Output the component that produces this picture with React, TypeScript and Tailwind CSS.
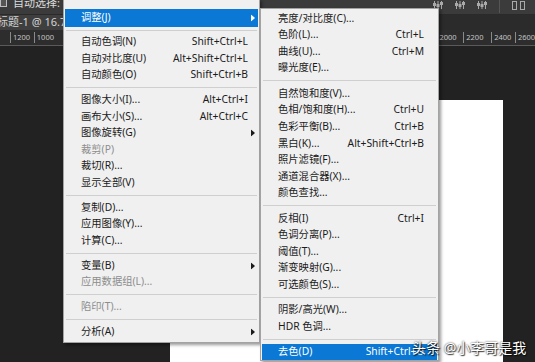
import React from "react";

type Item =
  | { sep: true }
  | { sep?: false; label: string; sc?: string; arrow?: boolean; off?: boolean; hl?: boolean };

const S: Item = { sep: true };

const MAIN: Item[] = [
  { label: "调整(J)", arrow: true, hl: true },
  S,
  { label: "自动色调(N)", sc: "Shift+Ctrl+L" },
  { label: "自动对比度(U)", sc: "Alt+Shift+Ctrl+L" },
  { label: "自动颜色(O)", sc: "Shift+Ctrl+B" },
  S,
  { label: "图像大小(I)...", sc: "Alt+Ctrl+I" },
  { label: "画布大小(S)...", sc: "Alt+Ctrl+C" },
  { label: "图像旋转(G)", arrow: true },
  { label: "裁剪(P)", off: true },
  { label: "裁切(R)..." },
  { label: "显示全部(V)" },
  S,
  { label: "复制(D)..." },
  { label: "应用图像(Y)..." },
  { label: "计算(C)..." },
  S,
  { label: "变量(B)", arrow: true },
  { label: "应用数据组(L)...", off: true },
  S,
  { label: "陷印(T)...", off: true },
  S,
  { label: "分析(A)", arrow: true },
];

const SUB: Item[] = [
  { label: "亮度/对比度(C)..." },
  { label: "色阶(L)...", sc: "Ctrl+L" },
  { label: "曲线(U)...", sc: "Ctrl+M" },
  { label: "曝光度(E)..." },
  S,
  { label: "自然饱和度(V)..." },
  { label: "色相/饱和度(H)...", sc: "Ctrl+U" },
  { label: "色彩平衡(B)...", sc: "Ctrl+B" },
  { label: "黑白(K)...", sc: "Alt+Shift+Ctrl+B" },
  { label: "照片滤镜(F)..." },
  { label: "通道混合器(X)..." },
  { label: "颜色查找..." },
  S,
  { label: "反相(I)", sc: "Ctrl+I" },
  { label: "色调分离(P)..." },
  { label: "阈值(T)..." },
  { label: "渐变映射(G)..." },
  { label: "可选颜色(S)..." },
  S,
  { label: "阴影/高光(W)..." },
  { label: "HDR 色调..." },
  S,
  { label: "去色(D)", sc: "Shift+Ctrl+U", hl: true },
];

function Arrow({ white }: { white?: boolean }) {
  return (
    <svg width="4" height="7" viewBox="0 0 4 7" className="absolute right-[3px] top-1/2 -translate-y-1/2">
      <path d="M0 0 L4 3.5 L0 7 Z" fill={white ? "#ffffff" : "#1b1b1b"} />
    </svg>
  );
}

function Menu({ items, sub }: { items: Item[]; sub?: boolean }) {
  return (
    <>
      {items.map((it, i) => {
        if (it.sep)
          return (
            <div key={i} className={`${sub ? "h-[8.8px]" : i === 1 ? "h-[6.75px]" : "h-[8.5px]"} flex items-center px-[1px]`}>
              <div className="w-full h-px bg-[#cfcfcf]" />
            </div>
          );
        const color = it.hl ? "text-white" : it.off ? "text-[#8d8d8d]" : "text-[#1b1b1b]";
        const h = sub ? "h-[16.6px]" : it.hl ? "h-[18px]" : "h-[16.5px]";
        return (
          <div
            key={i}
            className={`relative flex items-center justify-between ${h} ${sub ? "pl-[16px] pr-[13px]" : "pl-[16px] pr-[10px]"} ${it.hl ? "bg-[#0a78d4]" : ""} ${color}`}
          >
            <span>{it.label}</span>
            {it.sc && <span>{it.sc}</span>}
            {it.arrow && <Arrow white={it.hl} />}
          </div>
        );
      })}
    </>
  );
}

function Tick({ w, label }: { w: string; label: string }) {
  return (
    <div className={`${w} h-full border-l border-[#8a8a8a] flex items-center pl-[2px] text-[7.5px] text-[#c4c4c4]`}>
      {label}
    </div>
  );
}

export default function App() {
  return (
    <div className="relative w-[535px] h-[362px] overflow-hidden bg-[#222222] font-['Noto_Sans','Noto_Sans_CJK_SC',sans-serif] flex flex-col">
      {/* toolbar */}
      <div className="h-[15px] bg-[#3b3b3b] border-b border-[#2a2a2a] flex items-start shrink-0">
        <div className="w-[7px] h-[8px] mt-[-1px] border border-[#bdbdbd] bg-[#555]" />
        <span className="ml-[6px] mt-[-4px] text-[11px] leading-[14px] text-[#dcdcdc]">自动选择:</span>
        <div className="ml-auto flex items-start gap-[12px] mr-[10px] mt-[1px]">
          {[0, 1, 2].map(k => (
            <svg key={k} width="10" height="9" viewBox="0 0 10 9">
              <rect x="1" y="0" width="1" height="8" fill="#a9a9a9" />
              <rect x="4.5" y="0" width="1" height="8" fill="#a9a9a9" />
              <rect x="8" y="0" width="1" height="8" fill="#a9a9a9" />
              <rect x="0" y="2" width="3" height="3" fill="#a9a9a9" />
              <rect x="3.5" y="3" width="3" height="3" fill="#a9a9a9" />
              <rect x="7" y="1" width="3" height="3" fill="#a9a9a9" />
            </svg>
          ))}
          <div className="w-px h-[13px] mt-[-1px] bg-[#555]" />
          <svg width="13" height="9" viewBox="0 0 13 9">
            <rect x="0.5" y="0.5" width="4" height="8" fill="none" stroke="#a9a9a9" />
            <rect x="8.5" y="0.5" width="4" height="8" fill="none" stroke="#a9a9a9" />
          </svg>
        </div>
      </div>
      {/* tab bar */}
      <div className="h-[15px] bg-[#2b2b2b] flex shrink-0">
        <div className="w-[90px] bg-[#3f3f3f] flex items-center overflow-hidden">
          <span className="ml-[-14px] whitespace-nowrap text-[11px] text-[#d4d4d4]">无标题-1 @ 16.7%</span>
        </div>
      </div>
      {/* ruler */}
      <div className="h-[16px] bg-[#2d2d2d] border-b border-[#5a5a5a] flex items-stretch py-[2px] shrink-0">
        <div className="w-[10px]" />
        <Tick w="w-[24px]" label="1200" />
        <Tick w="w-[27px]" label="1000" />
        <div className="w-[378px]" />
        <Tick w="w-[27px]" label="2000" />
        <Tick w="w-[28px]" label="2200" />
        <Tick w="w-[24px]" label="2400" />
        <Tick w="w-[20px]" label="2600" />
      </div>
      {/* canvas */}
      <div className="flex-1 flex pl-[170px] pt-[54px]">
        <div className="w-[333px] bg-white" />
      </div>

      {/* main menu */}
      <div className="absolute left-[63px] top-[-1px] w-[197px] bg-[#f0f0f0] border border-[#a3a3a3] shadow-[2px_2px_3px_rgba(0,0,0,0.4)] pt-[9px] pb-[1.5px] px-[1px] text-[10.3px]">
        <Menu items={MAIN} />
      </div>

      {/* submenu */}
      <div className="absolute left-[260px] top-[8px] w-[179px] bg-[#f0f0f0] border border-[#a3a3a3] shadow-[2px_2px_3px_rgba(0,0,0,0.4)] pt-[1px] px-[1px] text-[10.3px]">
        <Menu items={SUB} sub />
      </div>

      {/* watermark */}
      <div className="absolute left-[412px] top-[337px] text-[14px] text-white whitespace-nowrap [text-shadow:0_0_2px_rgba(0,0,0,0.9),1px_1px_1px_rgba(0,0,0,0.7)]">
        头条 @小李哥是我
      </div>
    </div>
  );
}
